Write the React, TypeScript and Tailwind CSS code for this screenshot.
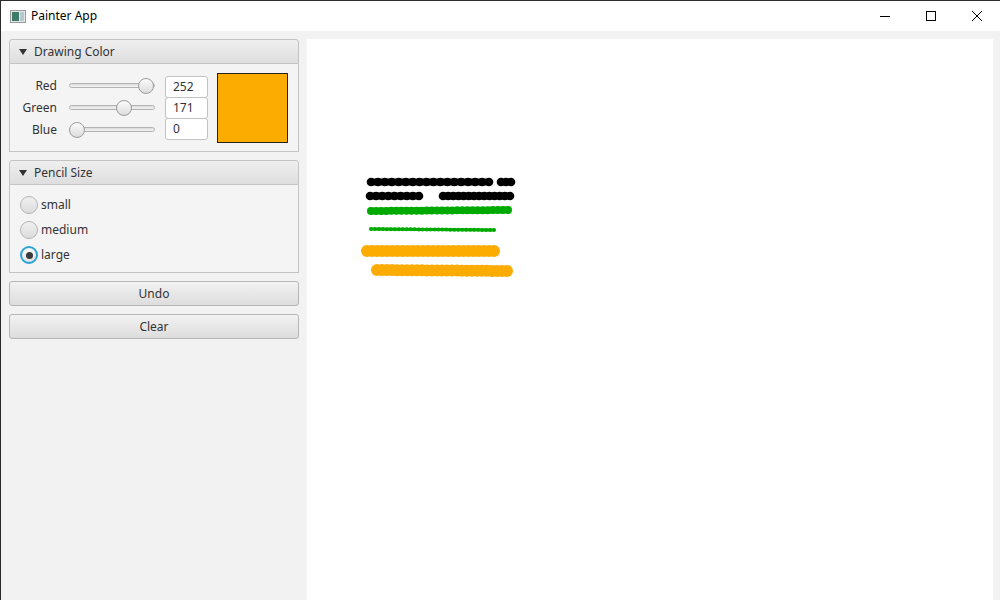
import React from "react";

const font = { fontFamily: '"Noto Sans", "Open Sans", sans-serif' };

function TitleBar() {
  return (
    <div className="flex h-[31px] items-center border-t border-[#2b2b2b] bg-white">
      <svg width="16" height="13" viewBox="0 0 16 13" className="ml-[9px]">
        <rect x="0.5" y="0.5" width="15" height="12" fill="#e6e6e6" stroke="#9a9a9a" />
        <rect x="2" y="2" width="7" height="9" fill="#3d7a6a" />
        <rect x="10" y="2" width="4" height="9" fill="#b8c8d0" />
      </svg>
      <span className="ml-[5px] text-[12px] text-black">Painter App</span>
      <div className="ml-auto flex h-full items-center">
        <div className="flex h-full w-[46px] items-center justify-center">
          <div className="h-px w-[10px] bg-black" />
        </div>
        <div className="flex h-full w-[46px] items-center justify-center">
          <div className="h-[10px] w-[10px] border border-black" />
        </div>
        <div className="flex h-full w-[46px] items-center justify-center">
          <svg width="12" height="12" viewBox="0 0 12 12">
            <path d="M1 1 L11 11 M11 1 L1 11" stroke="#000" strokeWidth="1" />
          </svg>
        </div>
      </div>
    </div>
  );
}

function PaneHeader({ title }: { title: string }) {
  return (
    <div className="flex h-[25px] items-center rounded-t-[3px] border border-[#c4c4c4] bg-gradient-to-b from-[#efefef] to-[#dedede] pl-[9px]">
      <svg width="8" height="6" viewBox="0 0 8 6">
        <path d="M0 0 L8 0 L4 6 Z" fill="#333" />
      </svg>
      <span className="ml-[7px] text-[12px] text-[#333]">{title}</span>
    </div>
  );
}

function Slider({ pct }: { pct: number }) {
  return (
    <div className="relative h-[16px] w-[86px]">
      <div className="absolute left-0 right-0 top-[5px] h-[5px] rounded-full border border-[#b3b3b3] bg-gradient-to-b from-[#dcdcdc] to-[#f4f4f4]" />
      <div
        className="absolute top-0 h-[16px] w-[16px] rounded-full border border-[#9c9c9c] bg-gradient-to-b from-[#fbfbfb] to-[#dcdcdc]"
        style={{ left: `${pct * 70}px` }}
      />
    </div>
  );
}

function ColorRow({ label, value }: { label: string; value: number }) {
  return (
    <div className="flex h-[22px] items-center">
      <span className="w-[47px] text-right text-[12px] text-[#333]">{label}</span>
      <div className="ml-[12px]">
        <Slider pct={value / 255} />
      </div>
    </div>
  );
}

function Radio({ label, checked }: { label: string; checked?: boolean }) {
  return (
    <div className="flex h-[25px] items-center">
      {checked ? (
        <div className="flex h-[18px] w-[18px] items-center justify-center rounded-full border-2 border-[#2aa3d8] bg-gradient-to-b from-[#fafafa] to-[#e2e2e2]">
          <div className="h-[7px] w-[7px] rounded-full bg-[#3a3a3a]" />
        </div>
      ) : (
        <div className="h-[18px] w-[18px] rounded-full border border-[#b5b5b5] bg-gradient-to-b from-[#f0f0f0] to-[#dcdcdc]" />
      )}
      <span className="ml-[3px] text-[12px] text-[#333]">{label}</span>
    </div>
  );
}

function Button({ label }: { label: string }) {
  return (
    <div className="flex h-[25px] items-center justify-center rounded-[3px] border border-[#b5b5b5] bg-gradient-to-b from-[#f2f2f2] to-[#dddddd] text-[12px] text-[#333]">
      {label}
    </div>
  );
}

type Stroke = { pts: [number, number][]; r: number; color: string; step: number };

const strokes: Stroke[] = [
  { pts: [[371, 182], [489, 182]], r: 4.3, color: "#000", step: 7 },
  { pts: [[501, 182], [511, 182]], r: 4.3, color: "#000", step: 5 },
  { pts: [[370, 196], [419, 196]], r: 4.3, color: "#000", step: 6 },
  { pts: [[443, 196], [510, 196]], r: 4.3, color: "#000", step: 5 },
  { pts: [[371, 211], [508, 210]], r: 4, color: "#00aa00", step: 5 },
  { pts: [[371, 229], [494, 230]], r: 2, color: "#00aa00", step: 4 },
  { pts: [[367, 251], [494, 251]], r: 6, color: "#fcab00", step: 5 },
  { pts: [[377, 270], [507, 271]], r: 6, color: "#fcab00", step: 5 },
];

function Drawing() {
  return (
    <svg width="686" height="561" viewBox="307 39 686 561" className="block">
      {strokes.map((s, i) => {
        const [[x1, y1], [x2, y2]] = s.pts;
        const n = Math.max(1, Math.round((x2 - x1) / s.step));
        const dots = [];
        for (let k = 0; k <= n; k++) {
          const t = k / n;
          dots.push(<circle key={k} cx={x1 + (x2 - x1) * t} cy={y1 + (y2 - y1) * t} r={s.r} fill={s.color} />);
        }
        return (
          <g key={i}>
            <line x1={x1} y1={y1} x2={x2} y2={y2} stroke={s.color} strokeWidth={s.r * 1.6} />
            {dots}
          </g>
        );
      })}
    </svg>
  );
}

export default function App() {
  return (
    <div className="flex h-[600px] w-[1000px] flex-col overflow-hidden border-l border-[#2b2b2b] bg-[#f2f2f2]" style={font}>
      <TitleBar />
      <div className="flex flex-1 gap-[8px] pl-[8px] pr-[7px] pt-[8px]">
        <div className="flex w-[290px] flex-col gap-[8px]">
          <div>
            <PaneHeader title="Drawing Color" />
            <div className="flex h-[88px] items-center border border-t-0 border-[#c4c4c4] bg-[#f4f4f4]">
              <div className="flex flex-col">
                <ColorRow label="Red" value={252} />
                <ColorRow label="Green" value={171} />
                <ColorRow label="Blue" value={0} />
              </div>
              <div className="ml-[10px] flex flex-col">
                {["252", "171", "0"].map((v, i) => (
                  <div
                    key={v}
                    className={`flex h-[22px] w-[43px] items-center rounded-[3px] border border-[#c2c2c2] bg-white pl-[7px] text-[12px] text-[#333] ${i > 0 ? "-mt-px" : ""}`}
                  >
                    {v}
                  </div>
                ))}
              </div>
              <div className="ml-[9px] h-[70px] w-[71px] border border-[#222] bg-[#fcab00]" />
            </div>
          </div>
          <div>
            <PaneHeader title="Pencil Size" />
            <div className="flex h-[88px] flex-col justify-center border border-t-0 border-[#c4c4c4] bg-[#f4f4f4] pl-[10px] pt-[3px]">
              <Radio label="small" />
              <Radio label="medium" />
              <Radio label="large" checked />
            </div>
          </div>
          <Button label="Undo" />
          <Button label="Clear" />
        </div>
        <div className="flex-1 bg-white">
          <Drawing />
        </div>
      </div>
    </div>
  );
}
